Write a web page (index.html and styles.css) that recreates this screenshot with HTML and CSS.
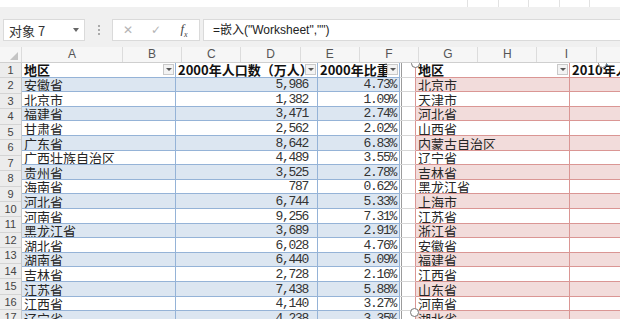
FILE: index.html
```html
<!DOCTYPE html>
<html lang="zh-CN">
<head>
    <meta charset="UTF-8">
    <title>对象 7 - 嵌入工作表</title>
    <link rel="stylesheet" href="styles.css">
</head>
<body>

<div class="app">
    <div class="top-strip">
        <div class="strip-cells"><span></span><span></span><span></span><span></span><span></span></div>
    </div>

    <div class="toolbar">
        <div class="name-box">
            <span>对象 7</span>
            <span class="caret"></span>
        </div>
        <div class="dots"><i></i><i></i><i></i></div>
        <div class="fx-buttons">
            <span class="fx-btn off">&#x2715;</span>
            <span class="fx-btn off">&#x2713;</span>
            <span class="fx-btn fx"><i>f</i><sub>x</sub></span>
        </div>
        <div class="formula">=嵌入("Worksheet","")</div>
    </div>

    <div class="col-head">
        <div class="corner"><span class="corner-tri"></span></div>
        <div class="col col-a">A</div>
        <div class="col">B</div>
        <div class="col">C</div>
        <div class="col">D</div>
        <div class="col">E</div>
        <div class="col">F</div>
        <div class="col">G</div>
        <div class="col">H</div>
        <div class="col">I</div>
    </div>

    <div class="sheet">
        <div class="row-head" id="rowHead"></div>
        <div class="embed" id="embed"></div>
        <span class="handle h-tl"></span>
        <span class="handle h-tm"></span>
        <span class="handle h-ml"></span>
    </div>
</div>

<script>
    // 2000 census table (blue) and 2010 table (red)
    const blueRows = [
        ['安徽省', '5,986', '4.73%'],
        ['北京市', '1,382', '1.09%'],
        ['福建省', '3,471', '2.74%'],
        ['甘肃省', '2,562', '2.02%'],
        ['广东省', '8,642', '6.83%'],
        ['广西壮族自治区', '4,489', '3.55%'],
        ['贵州省', '3,525', '2.78%'],
        ['海南省', '787', '0.62%'],
        ['河北省', '6,744', '5.33%'],
        ['河南省', '9,256', '7.31%'],
        ['黑龙江省', '3,689', '2.91%'],
        ['湖北省', '6,028', '4.76%'],
        ['湖南省', '6,440', '5.09%'],
        ['吉林省', '2,728', '2.16%'],
        ['江苏省', '7,438', '5.88%'],
        ['江西省', '4,140', '3.27%'],
        ['辽宁省', '4,238', '3.35%']
    ];
    const redRows = ['北京市', '天津市', '河北省', '山西省', '内蒙古自治区', '辽宁省', '吉林省',
        '黑龙江省', '上海市', '江苏省', '浙江省', '安徽省', '福建省', '江西省', '山东省', '河南省', '湖北省'];

    const rowHead = document.getElementById('rowHead');
    for (let i = 1; i <= 17; i++) {
        const div = document.createElement('div');
        div.className = 'rn';
        div.innerText = i;
        rowHead.appendChild(div);
    }

    function cell(cls, html) {
        return `<div class="c ${cls}">${html}</div>`;
    }
    const filter = '<span class="filter"></span>';

    let html = '';
    html += cell('b head', `<span class="t">地区</span>${filter}`);
    html += cell('b head', `<span class="t">2000年人口数（万人）</span>${filter}`);
    html += cell('b head', `<span class="t">2000年比重</span>${filter}`);
    html += cell('gap', '');
    html += cell('r head', `<span class="t">地区</span>${filter}`);
    html += cell('r head', `<span class="t">2010年人口数（万人）</span>`);

    blueRows.forEach((row, i) => {
        const band = i % 2 === 0 ? ' band' : '';
        html += cell('b' + band, `<span class="t">${row[0]}</span>`);
        html += cell('b num n1' + band, row[1]);
        html += cell('b num n2' + band, row[2]);
        html += cell('gap', '');
        html += cell('r' + band, `<span class="t">${redRows[i]}</span>`);
        html += cell('r' + band, '');
    });
    document.getElementById('embed').innerHTML = html;
</script>

</body>
</html>
```

FILE: styles.css
```css
body {
    margin: 0;
    background: #fff;
}
.app {
    width: 620px;
    height: 319px;
    overflow: hidden;
    font-family: "Noto Sans CJK SC", sans-serif;
    color: #222;
}

/* ribbon leftover at the very top */
.top-strip {
    height: 7px;
    background: #fff;
    display: flex;
    justify-content: flex-end;
}
.strip-cells {
    display: flex;
    width: 153px;
}
.strip-cells span {
    width: 31px;
    border-left: 1px solid #e2e2e2;
}

/* name box + formula bar */
.toolbar {
    height: 40px;
    background: #f0f0f0;
    display: flex;
    align-items: flex-start;
    padding-top: 12px;
    box-sizing: border-box;
}
.name-box {
    margin-left: 3px;
    width: 82px;
    height: 22px;
    box-sizing: border-box;
    background: #fff;
    border: 1px solid #dadada;
    display: flex;
    align-items: center;
    justify-content: space-between;
    padding: 0 5px 0 5px;
    font-size: 13px;
    color: #333;
}
.caret {
    width: 0;
    height: 0;
    border-left: 3px solid transparent;
    border-right: 3px solid transparent;
    border-top: 4px solid #666;
}
.dots {
    width: 27px;
    height: 22px;
    display: flex;
    flex-direction: column;
    align-items: center;
    justify-content: center;
    gap: 2px;
}
.dots i {
    width: 2px;
    height: 2px;
    background: #aaa;
}
.fx-buttons {
    width: 88px;
    height: 22px;
    box-sizing: border-box;
    background: #fff;
    border: 1px solid #dadada;
    display: flex;
    align-items: center;
    padding-left: 8px;
    gap: 14px;
}
.fx-btn {
    width: 14px;
    text-align: center;
    font-family: "DejaVu Sans", sans-serif;
    font-size: 12px;
}
.fx-btn.off {
    color: #b4b4b4;
}
.fx-btn.fx {
    font-family: "Liberation Serif", serif;
    font-size: 13px;
    color: #444;
}
.fx-btn.fx sub {
    font-size: 8px;
    font-style: italic;
}
.formula {
    margin-left: 3px;
    flex: 1;
    height: 22px;
    box-sizing: border-box;
    background: #fff;
    border: 1px solid #dadada;
    border-right: none;
    padding-left: 9px;
    font-family: "Liberation Sans", "Noto Sans CJK SC", sans-serif;
    font-size: 12px;
    line-height: 20px;
    color: #222;
}

/* column letters */
.col-head {
    height: 16px;
    display: flex;
    background: #f6f6f6;
    border-bottom: 1px solid #cfcfcf;
    box-sizing: border-box;
    font-family: "Liberation Sans", sans-serif;
    font-size: 12px;
    color: #555;
}
.corner {
    width: 22px;
    position: relative;
    border-right: 1px solid #dcdcdc;
    box-sizing: border-box;
}
.corner-tri {
    position: absolute;
    right: 3px;
    bottom: 2px;
    width: 0;
    height: 0;
    border-left: 8px solid transparent;
    border-bottom: 8px solid #c4c4c4;
}
.col {
    width: 59.2px;
    flex: none;
    text-align: center;
    line-height: 15px;
    border-right: 1px solid #dcdcdc;
    box-sizing: border-box;
}
.col-a {
    width: 101px;
}

/* sheet body */
.sheet {
    position: relative;
    display: flex;
    height: 256px;
    overflow: hidden;
}
.row-head {
    width: 22px;
    flex: none;
    background: #ececec;
    border-right: 1px solid #c8c8c8;
    box-sizing: border-box;
}
.rn {
    height: 15.45px;
    box-sizing: border-box;
    border-bottom: 1px solid #d4d4d4;
    text-align: center;
    font-family: "Liberation Sans", sans-serif;
    font-size: 11px;
    line-height: 15px;
    color: #444;
}

/* embedded worksheet */
.embed {
    display: grid;
    grid-template-columns: 154px 142px 82px 16px 154px 140px;
    grid-auto-rows: 14.6px;
    flex: none;
}
.c {
    box-sizing: border-box;
    border-right: 1px solid;
    border-bottom: 1px solid;
    display: flex;
    align-items: flex-end;
    overflow: hidden;
    white-space: nowrap;
    font-size: 13px;
    line-height: 13px;
    padding-left: 2px;
    background: #fff;
    color: #262626;
}
.c .t {
    flex: 1;
    overflow: hidden;
}
.c.b {
    border-color: #95b3d7;
}
.c.b.band {
    background: #dce6f1;
}
.c.r {
    border-color: #da9694;
}
.c.r.band {
    background: #f2dcdb;
}
.c.head {
    font-weight: bold;
    color: #111;
    align-items: center;
}
.c.head .t {
    line-height: 14px;
}
.c.gap {
    border-right-color: #da9694;
    border-bottom-color: #d6d6d6;
    background: linear-gradient(to right, #fff 1px, #9c9c9c 1px, #9c9c9c 2px, #fff 2px);
}
.c.num {
    justify-content: flex-end;
    font-family: "Liberation Mono", monospace;
    letter-spacing: -1.3px;
    color: #333;
}
.c.n1 {
    padding-right: 9px;
}
.c.n2 {
    padding-right: 3px;
}
.filter {
    flex: none;
    width: 11px;
    height: 11px;
    box-sizing: border-box;
    margin-right: 1px;
    background: #f3f3f3;
    border: 1px solid #c9c9c9;
    position: relative;
}
.filter::after {
    content: "";
    position: absolute;
    left: 2px;
    top: 3px;
    border-left: 3px solid transparent;
    border-right: 3px solid transparent;
    border-top: 3px solid #555;
}

/* selection handles of the object */
.handle {
    position: absolute;
    width: 7px;
    height: 7px;
    border-radius: 50%;
    border: 1px solid #777;
    background: #fff;
}
.h-tl {
    left: 411px;
    top: -4px;
}
.h-tm {
    left: 598px;
    top: -4px;
}
.h-ml {
    left: 410px;
    top: 245px;
}
```
